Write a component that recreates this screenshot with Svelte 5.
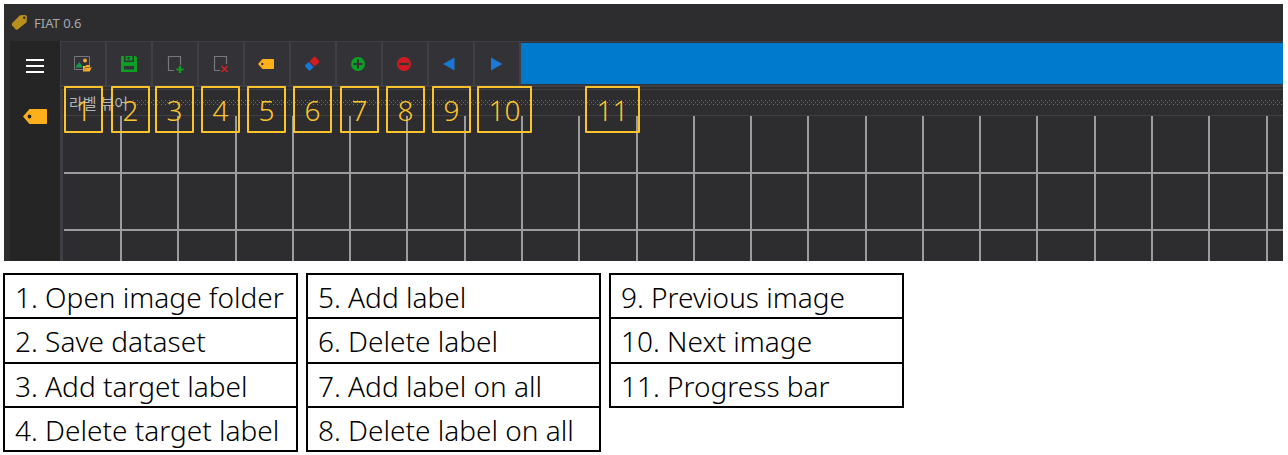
<script>
  const tools = [
    { icon: 'open', label: 'Open image folder' },
    { icon: 'save', label: 'Save dataset' },
    { icon: 'addTarget', label: 'Add target label' },
    { icon: 'deleteTarget', label: 'Delete target label' },
    { icon: 'tag', label: 'Add label' },
    { icon: 'eraser', label: 'Delete label' },
    { icon: 'plus', label: 'Add label on all' },
    { icon: 'minus', label: 'Delete label on all' },
    { icon: 'prev', label: 'Previous image' },
    { icon: 'next', label: 'Next image' }
  ];

  // Callout markers: number and left edge over the toolbar
  const markers = [
    { n: 1, x: 60 }, { n: 2, x: 107 }, { n: 3, x: 151 }, { n: 4, x: 197 },
    { n: 5, x: 243 }, { n: 6, x: 289 }, { n: 7, x: 336 }, { n: 8, x: 382 },
    { n: 9, x: 428 }, { n: 10, x: 473 }, { n: 11, x: 581 }
  ];

  const names = [...tools.map((t) => t.label), 'Progress bar'].map((t, i) => `${i + 1}. ${t}`);
  const legend = [names.slice(0, 4), names.slice(4, 8), names.slice(8)];

  // Canvas grid lines
  const cell = 57.28;
  const columns = Array.from({ length: 60 }, (_, i) => Math.round(57 + i * cell));
  const rows = [56, 113];
</script>

<main>
  <section class="app">
    <header class="title">
      <svg width="17" height="17" viewBox="0 0 17 17" aria-hidden="true">
        <path d="M9 1.2 14.5 1 16 2.5 15.6 8.2 6.6 15.6 5 15.7 1 11.2 1 9.2Z" fill="#b8911d" />
        <circle cx="13.2" cy="3.8" r="1.2" fill="#2d2d30" />
      </svg>
      <span>FIAT 0.6</span>
    </header>

    <div class="body">
      <nav class="side">
        <button aria-label="Menu">
          <svg width="20" height="14" viewBox="0 0 20 14">
            <path d="M1 1H19M1 7H19M1 13H19" stroke="#fff" stroke-width="2" />
          </svg>
        </button>
        <button aria-label="Labels">
          <svg width="24" height="15" viewBox="0 0 24 15">
            <path fill-rule="evenodd" d="M6.5 0H23Q24 0 24 1V14Q24 15 23 15H6.5L0 7.5ZM6.5 5.6A1.9 1.9 0 1 0 6.5 9.4A1.9 1.9 0 1 0 6.5 5.6Z" fill="#fdb01c" />
          </svg>
        </button>
      </nav>

      <div class="work">
        <div class="toolbar">
          {#each tools as t}
            <button aria-label={t.label}>
              <svg width="20" height="20" viewBox="0 0 20 20">
                {#if t.icon === 'open'}
                  <path d="M11 15.5H2.5V2.5H17.5V11" fill="none" stroke="#77777a" />
                  <path d="M4 13.5V12L7.5 8 11 13.5Z" fill="#0f9d4c" />
                  <circle cx="13" cy="6.4" r="2" fill="#f3aa2c" />
                  <path d="M11 17.5V12H13.5L14.5 11H18V13H19.8L17.8 17.5Z" fill="#f3aa2c" />
                  <path d="M12.5 15.5 13.5 13.5H19" fill="none" stroke="#6b501f" stroke-width=".7" />
                {:else if t.icon === 'save'}
                  <path fill-rule="evenodd" d="M3 2H6V8H16V2H17.5L19 3.5V18H3ZM6 12V15.5H16V12Z" fill="#0c9f24" />
                  <path fill-rule="evenodd" d="M7.5 2H14.5V6.5H7.5ZM9.5 3V5.5H11.5V3Z" fill="#0c9f24" />
                {:else if t.icon === 'addTarget'}
                  <path d="M10 16.5H4.5V2.5H16.5V11" fill="none" stroke="#77777a" stroke-width="1.2" />
                  <path d="M16 12V19M12.5 15.5H19.5" stroke="#0c9f24" stroke-width="2.2" />
                {:else if t.icon === 'deleteTarget'}
                  <path d="M10 16.5H4.5V2.5H16.5V10" fill="none" stroke="#77777a" stroke-width="1.2" />
                  <path d="M11.5 12 17.5 18M17.5 12 11.5 18" stroke="#cf1f26" stroke-width="1.7" />
                {:else if t.icon === 'tag'}
                  <path fill-rule="evenodd" d="M6.5 5H17.4L18 5.6V14.4L17.4 15H6.5L2 10ZM6.3 8.8A1.2 1.2 0 1 0 6.3 11.2A1.2 1.2 0 1 0 6.3 8.8Z" fill="#fdb01c" />
                {:else if t.icon === 'eraser'}
                  <path d="M7.6 7.2 12 3.1Q12.8 2.5 13.6 3.3L17 7Q17.6 7.8 16.9 8.5L12.4 12.5Z" fill="#d61c20" />
                  <path d="M6.9 8 11.6 13.2 8.2 16.5Q7.4 17.1 6.6 16.3L3.2 12.6Q2.6 11.8 3.3 11.1Z" fill="#1878d4" />
                {:else if t.icon === 'plus'}
                  <circle cx="10" cy="10" r="7" fill="#0c9f24" />
                  <path d="M10 5.5V14.5M5.5 10H14.5" stroke="#333337" stroke-width="2" />
                {:else if t.icon === 'minus'}
                  <circle cx="10" cy="10" r="7" fill="#d01c20" />
                  <path d="M5 10H15" stroke="#333337" stroke-width="2.2" />
                {:else if t.icon === 'prev'}
                  <path d="M14.5 3.5V16.5L3 10Z" fill="#1878d4" />
                {:else}
                  <path d="M5 3.5V16.5L16.5 10Z" fill="#1878d4" />
                {/if}
              </svg>
            </button>
          {/each}
          <div class="progress" role="progressbar" aria-label="Progress bar" aria-valuenow="100"></div>
        </div>

        <div class="viewer">
          <div class="caption">
            <span>라벨 뷰어</span>
            <svg class="grip" aria-hidden="true">
              <pattern id="dots" width="4" height="4" patternUnits="userSpaceOnUse">
                <rect width="1" height="1" fill="#747478" />
                <rect x="2" y="2" width="1" height="1" fill="#747478" />
              </pattern>
              <rect width="100%" height="5" fill="url(#dots)" />
            </svg>
          </div>
          <svg class="canvas" aria-hidden="true">
            {#each columns as x}<rect {x} y="0" width="2" height="100%" fill="#9c9c9e" />{/each}
            {#each rows as y}<rect x="1" {y} width="100%" height="2" fill="#9c9c9e" />{/each}
          </svg>
        </div>
      </div>
    </div>

    {#each markers as m}
      <span class="marker" class:wide={m.n > 9} style:left="{m.x}px">{m.n}</span>
    {/each}
  </section>

  <section class="legend">
    {#each legend as group}
      <table>
        <tbody>
          {#each group as name}<tr><td>{name}</td></tr>{/each}
        </tbody>
      </table>
    {/each}
  </section>
</main>

<style>
  :global(body) {
    background: #fff;
  }
  main {
    padding: 4px 5px 3px 4px;
    font-family: "Noto Sans", "Noto Sans CJK KR", sans-serif;
  }
  .app {
    position: relative;
    background: #2d2d30;
    overflow: hidden;
  }
  .title {
    display: flex;
    align-items: center;
    gap: 6px;
    height: 37px;
    padding-left: 7px;
    color: #a8a8aa;
    font-size: 13px;
  }
  .body {
    display: flex;
    padding-left: 6px;
  }
  button {
    display: flex;
    align-items: center;
    justify-content: center;
    padding: 0;
    border: 0;
    background: none;
  }
  .side {
    flex: none;
    width: 50px;
    background: #252526;
  }
  .side button {
    width: 50px;
    height: 50px;
  }
  .work {
    flex: 1;
    min-width: 0;
    border-left: 1px solid #3f3f46;
  }
  .toolbar {
    display: flex;
    height: 46px;
    box-sizing: border-box;
    border-top: 1px solid #3f3f46;
    border-bottom: 2px solid #3f3f46;
    background: #333337;
  }
  .toolbar button {
    flex: none;
    width: 46px;
    box-sizing: border-box;
    padding-right: 2px;
    border-right: 2px solid #3f3f46;
  }
  .progress {
    flex: 1;
    margin: 1px 0;
    background: #007acc;
  }
  .viewer {
    margin-top: 2px;
    border-top: 1px solid #3f3f46;
    border-left: 2px solid #3f3f46;
  }
  .caption {
    display: flex;
    align-items: center;
    gap: 5px;
    height: 25px;
    padding-left: 6px;
    border-bottom: 1px solid #3f3f46;
    color: #b4b4b6;
    font-size: 15px;
    line-height: 20px;
  }
  .grip {
    flex: 1;
    height: 5px;
  }
  .canvas {
    display: block;
    width: 100%;
    height: 145px;
  }
  .marker {
    position: absolute;
    top: 82px;
    width: 39px;
    height: 47px;
    box-sizing: border-box;
    border: 2px solid #fcc42c;
    border-radius: 1px;
    color: #fcc42c;
    font-size: 28px;
    font-weight: 300;
    line-height: 44px;
    text-align: center;
  }
  .marker.wide {
    width: 55px;
  }
  .legend {
    display: flex;
    align-items: flex-start;
    gap: 8px;
    margin: 12px 0 0 -1px;
  }
  table {
    flex: 0 1 295px;
    border-collapse: collapse;
    border: 2px solid #000;
    color: #000;
    font-size: 28px;
    font-weight: 300;
    line-height: 36px;
  }
  tr {
    height: 44px;
  }
  tr:nth-child(2) {
    height: 45px;
  }
  td {
    padding: 1px 10px 0;
    border: 2px solid #000;
    white-space: nowrap;
  }
</style>
